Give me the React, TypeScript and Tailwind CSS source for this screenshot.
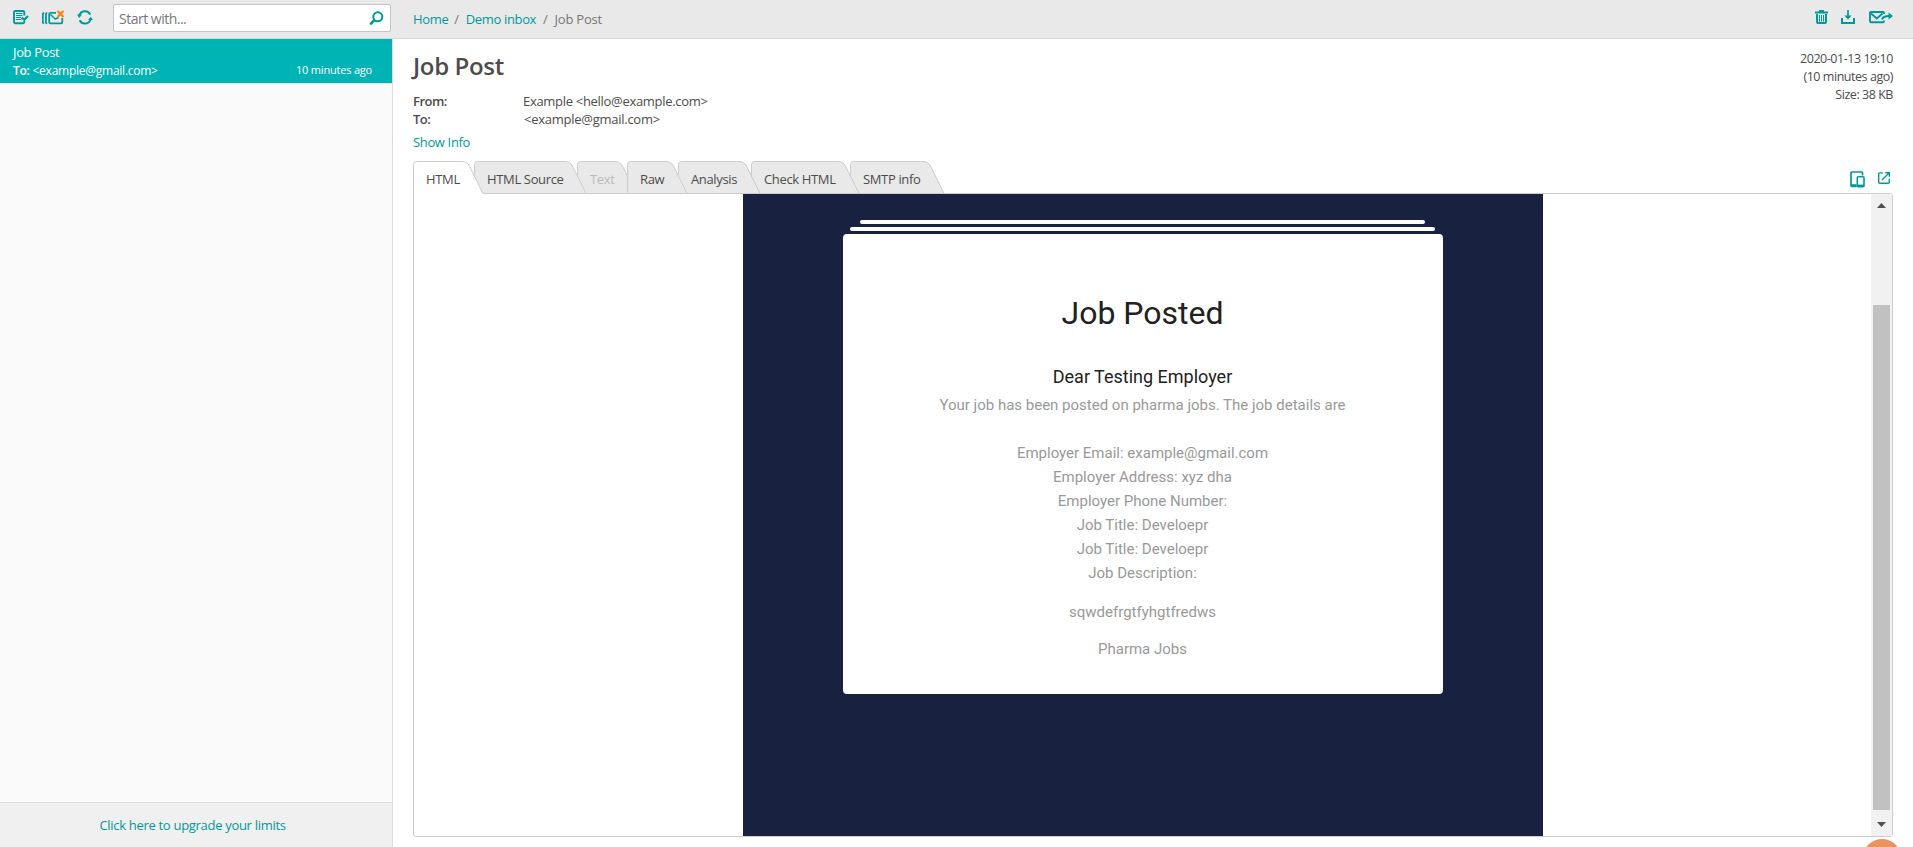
import type { ReactNode } from "react";

const TEAL = "#009999";

function ReadAllIcon() {
  return (
    <svg width="16" height="15" viewBox="0 0 16 15" fill="none" stroke={TEAL}>
      <path d="M11.300 5.500V2.200Q11.300 1 10.100 1H2.200Q1 1 1 2.200V12Q1 13.200 2.200 13.200H10.100Q11.300 13.200 11.300 12V11" strokeWidth="1.900" />
      <path d="M3 3.500H9.500M3 5.500H9.500M3 7.500H8M3 9.500H8.500" strokeWidth="1" />
      <path d="M8.700 7.500L11.300 9.800L15 6" strokeWidth="2.200" />
    </svg>
  );
}

function ClearInboxIcon() {
  return (
    <svg width="23" height="15" viewBox="0 0 23 15" fill="none" stroke={TEAL}>
      <path d="M2.200 2.800Q.8 2.800 .8 4.500V12Q.8 13.300 2.200 13.300M5.200 2.800Q3.900 2.800 3.900 4.500V12Q3.900 13.300 5.200 13.300" strokeWidth="1.800" />
      <path d="M14 2.900H8.500Q7.200 2.900 7.200 4.200V12Q7.200 13.300 8.500 13.300H19Q20.300 13.300 20.300 12V8" strokeWidth="1.800" />
      <path d="M8.500 4.500L13.300 9.200L16.500 7.500" strokeWidth="1.500" />
      <path d="M15.500 1L21.500 7M21.500 1L15.500 7" stroke="#ff7f11" strokeWidth="2.200" />
    </svg>
  );
}

function RefreshIcon() {
  return (
    <svg width="16" height="15" viewBox="0 0 16 15" fill="none" stroke={TEAL} strokeWidth="2">
      <path d="M2.200 6.200C3.300 .2 10.800 -.4 13.300 4.600M13.700 8.600C12.500 14.800 5 15 2.700 10.300" />
      <path d="M0 4.600H5L2.200 8ZM16 10H11L13.800 6.700Z" fill={TEAL} stroke="none" />
    </svg>
  );
}

function SearchIcon() {
  return (
    <svg width="15" height="15" viewBox="0 0 15 15" fill="none" stroke={TEAL}>
      <circle cx="8.800" cy="5.800" r="4.500" strokeWidth="2" />
      <path d="M5.600 9L1.200 13.300" strokeWidth="2.500" />
    </svg>
  );
}

function TrashIcon() {
  return (
    <svg width="13" height="14" viewBox="0 0 13 14" fill="none" stroke={TEAL}>
      <path d="M0 2.500H13M4 1H9" strokeWidth="2" />
      <path d="M2 4V12Q2 13 3 13H10Q11 13 11 12V4" strokeWidth="2" />
      <path d="M4.500 5V11.500M6.500 5V11.500M8.500 5V11.500" strokeWidth="1" />
    </svg>
  );
}

function DownloadIcon() {
  return (
    <svg width="14" height="14" viewBox="0 0 14 14" fill="none" stroke={TEAL}>
      <path d="M7 0V7" strokeWidth="1.700" />
      <path d="M3.300 5.500H10.700L7 9.600Z" fill={TEAL} stroke="none" />
      <path d="M1 8V13H13V8" strokeWidth="2" />
    </svg>
  );
}

function ForwardIcon() {
  return (
    <svg width="24" height="13" viewBox="0 0 24 13" fill="none" stroke={TEAL}>
      <path d="M15 3V2Q15 1 14 1H2Q1 1 1 2V10Q1 11.300 2 11.300H14Q15 11.300 15 9.500" strokeWidth="1.900" />
      <path d="M2 2.500L7.800 7.500L13.500 2.500" strokeWidth="1.700" />
      <path d="M13 8.500C14 5.500 16 5 20 5" strokeWidth="2" />
      <path d="M19.500 1.500L24 5L19.500 8.500Z" fill={TEAL} stroke="none" />
    </svg>
  );
}

function DevicesIcon() {
  return (
    <svg width="15" height="17" viewBox="0 0 15 17" fill="none" stroke={TEAL}>
      <path d="M12.500 4.500V2Q12.500 1 11.500 1H2Q1 1 1 2V14.500Q1 15.500 2 15.500H6.500" strokeWidth="1.700" />
      <path d="M1 14.500H6.500" strokeWidth="2.600" />
      <rect x="7.300" y="5.800" width="6.700" height="9.900" rx="1" strokeWidth="1.600" />
      <path d="M7.200 14.800H14" strokeWidth="2.400" />
    </svg>
  );
}

function OpenIcon() {
  return (
    <svg width="12" height="12" viewBox="0 0 12 12" fill="none" stroke={TEAL} strokeWidth="1.400">
      <path d="M5 .9H1.500Q.7 .9 .7 1.700V10.300Q.7 11.300 1.700 11.300H10.300Q11.300 11.300 11.300 10.300V6.800" />
      <path d="M4 8L10.500 1.500M7.300 .8H11.300V4.800" />
    </svg>
  );
}

type TabProps = {
  label: string;
  width: string;
  shape: number;
  layer: string;
  text?: string;
  active?: boolean;
};

function Tab({ label, width, shape, layer, text = "text-[#4c4c4c]", active = false }: TabProps) {
  const d = `M.5 33V3.500Q.5 .5 3.500 .5H${shape - 21}Q${shape - 16} .5 ${shape - 13.500} 5L${shape} 32.500`;
  return (
    <button className={`relative h-[33px] shrink-0 pb-px pl-[13px] text-left ${width} ${layer}`}>
      <svg className="absolute left-0 top-0 overflow-visible" width={shape} height="33" fill={active ? "#fff" : "#e9e9e9"}>
        <path d={`${d}V${active ? 33 : 32.500}H.5`} />
        <path d={d} fill="none" stroke="#ccc" />
        {!active && <path d={`M0 32.500H${shape}`} stroke="#ccc" />}
      </svg>
      <span className={`relative block whitespace-nowrap pt-1 ${text}`}>{label}</span>
    </button>
  );
}

function Crumb({ children }: { children: ReactNode }) {
  return <a className="text-[#009999]">{children}</a>;
}

export default function App() {
  return (
    <div className="flex h-[847px] w-[1913px] flex-col overflow-hidden bg-white font-['Open_Sans','Noto_Sans',sans-serif] text-[13px] leading-[18px] tracking-[-0.35px] text-[#4c4c4c]">
      <header className="flex h-[39px] shrink-0 border-b border-[#d8d8d8] bg-[#e9e9e9]">
        <div className="flex w-[393px] items-start">
          <div className="flex w-[113px] shrink-0 pl-[13px] pt-[10px]">
            <div className="w-[29px]"><ReadAllIcon /></div>
            <div className="w-[35px]"><ClearInboxIcon /></div>
            <RefreshIcon />
          </div>
          <div className="mt-1 flex h-7 w-[278px] items-center justify-between rounded-[2px] border border-[#c4c4c4] bg-white pl-[5px] pr-[6px]">
            <span className="pt-[2px] text-[14px] tracking-[-0.5px] text-[#777]">Start with...</span>
            <SearchIcon />
          </div>
        </div>
        <nav className="flex grow pl-5 pt-[10px] text-[#777]">
          <Crumb>Home</Crumb>
          <span className="pl-[6px] pr-[7px]">/</span>
          <Crumb>Demo inbox</Crumb>
          <span className="px-[7px]">/</span>
          <span className="tracking-[-0.2px]">Job Post</span>
        </nav>
        <div className="flex pr-5 pt-[10px]">
          <div className="w-[26px]"><TrashIcon /></div>
          <div className="w-7"><DownloadIcon /></div>
          <div className="pt-px"><ForwardIcon /></div>
        </div>
      </header>

      <div className="flex min-h-0 grow">
        <aside className="flex w-[393px] shrink-0 flex-col border-r border-[#ddd] bg-[#fafafa]">
          <div className="h-[45px] border-b border-[#e4e4e4] bg-[#00b3b5] bg-clip-padding pl-[13px] pr-5 pt-1 text-white">
            <div>Job Post</div>
            <div className="flex justify-between">
              <span className="pt-px text-[12px] tracking-[-0.25px]"><b className="font-semibold">To:</b> &lt;example@gmail.com&gt;</span>
              <span className="text-[11px] leading-[18px] tracking-[-0.2px]">10 minutes ago</span>
            </div>
          </div>
          <div className="grow" />
          <div className="flex h-[45px] items-center justify-center border-t border-[#ddd] bg-[#f0f0f0] pr-[7px] tracking-[-0.3px] text-[#009999]">
            Click here to upgrade your limits
          </div>
        </aside>

        <main className="flex grow flex-col pb-[10px] pl-5 pr-5">
          <div className="flex h-[122px] shrink-0 justify-between">
            <div>
              <h1 className="pt-[10px] text-[24px] font-semibold leading-[34px] tracking-[-0.35px]">Job Post</h1>
              <dl className="grid grid-cols-[110px_auto] pt-[9px]">
                <dt className="font-semibold tracking-[-0.5px]">From:</dt>
                <dd className="tracking-[-0.3px]">Example &lt;hello@example.com&gt;</dd>
                <dt className="font-semibold tracking-[-0.5px]">To:</dt>
                <dd className="pl-px tracking-[-0.26px]">&lt;example@gmail.com&gt;</dd>
              </dl>
              <a className="block pt-[5px] text-[#009999]">Show Info</a>
            </div>
            <div className="pt-[11px] text-right text-[12.5px] tracking-[-0.46px]">
              <div>2020-01-13 19:10</div>
              <div>(10 minutes ago)</div>
              <div>Size: 38 KB</div>
            </div>
          </div>

          <div className="flex h-8 shrink-0 justify-between">
            <div className="flex">
              <Tab label="HTML" width="w-[61px]" shape={70} layer="z-30" active />
              <Tab label="HTML Source" width="w-[103px]" shape={112} layer="z-20" />
              <Tab label="Text" width="w-[50px]" shape={59} layer="z-0" text="text-[#bbb]" />
              <Tab label="Raw" width="w-[51px]" shape={60} layer="z-20" />
              <Tab label="Analysis" width="w-[73px]" shape={82} layer="z-[15]" />
              <Tab label="Check HTML" width="w-[99px]" shape={108} layer="z-10" />
              <Tab label="SMTP info" width="w-[85px]" shape={94} layer="z-[5]" />
            </div>
            <div className="flex gap-[13px] pr-[3px] pt-[10px]">
              <DevicesIcon />
              <div className="pt-px"><OpenIcon /></div>
            </div>
          </div>

          <section className="flex grow rounded-b-[3px] rounded-tr-[3px] border border-[#ccc]">
            <div className="flex grow justify-center font-['Roboto',sans-serif] text-[15px] leading-6 tracking-normal text-[#999]">
              <article className="flex w-[800px] flex-col items-center bg-[#18213f] pt-[26px]">
                <div className="h-1 w-[565px] rounded-[2px] bg-white" />
                <div className="mt-[3px] h-1 w-[585px] rounded-[2px] bg-white" />
                <div className="mt-[3px] h-[460px] w-[600px] rounded-[4px] bg-white text-center">
                  <h2 className="pt-[59px] text-[32px] leading-[40px] text-[#212121]">Job Posted</h2>
                  <p className="pt-[32px] text-[18px] leading-[24px] text-[#212121]">Dear Testing Employer</p>
                  <p className="pt-1">Your job has been posted on pharma jobs. The job details are</p>
                  <div className="pt-6">
                    <p>Employer Email: example@gmail.com</p>
                    <p>Employer Address: xyz dha</p>
                    <p>Employer Phone Number:</p>
                    <p>Job Title: Develoepr</p>
                    <p>Job Title: Develoepr</p>
                    <p>Job Description:</p>
                  </div>
                  <p className="pt-[15px]">sqwdefrgtfyhgtfredws</p>
                  <p className="pt-[13px]">Pharma Jobs</p>
                </div>
              </article>
            </div>
            <div className="flex w-[21px] shrink-0 flex-col items-center bg-[#f1f1f1]">
              <svg className="mt-[9px] shrink-0" width="9" height="5"><path d="M0 5L4.500 0L9 5Z" fill="#505050" /></svg>
              <div className="mt-[97px] h-[505px] w-[17px] shrink-0 bg-[#c1c1c1]" />
              <svg className="mt-[12px] shrink-0" width="9" height="5"><path d="M0 0L4.500 5L9 0Z" fill="#505050" /></svg>
            </div>
          </section>
        </main>
      </div>
      <div className="absolute left-[1863px] top-[839px] h-2 w-[38px] overflow-hidden">
        <div className="h-[38px] w-[38px] rounded-full bg-[#e89362]" />
      </div>
    </div>
  );
}
